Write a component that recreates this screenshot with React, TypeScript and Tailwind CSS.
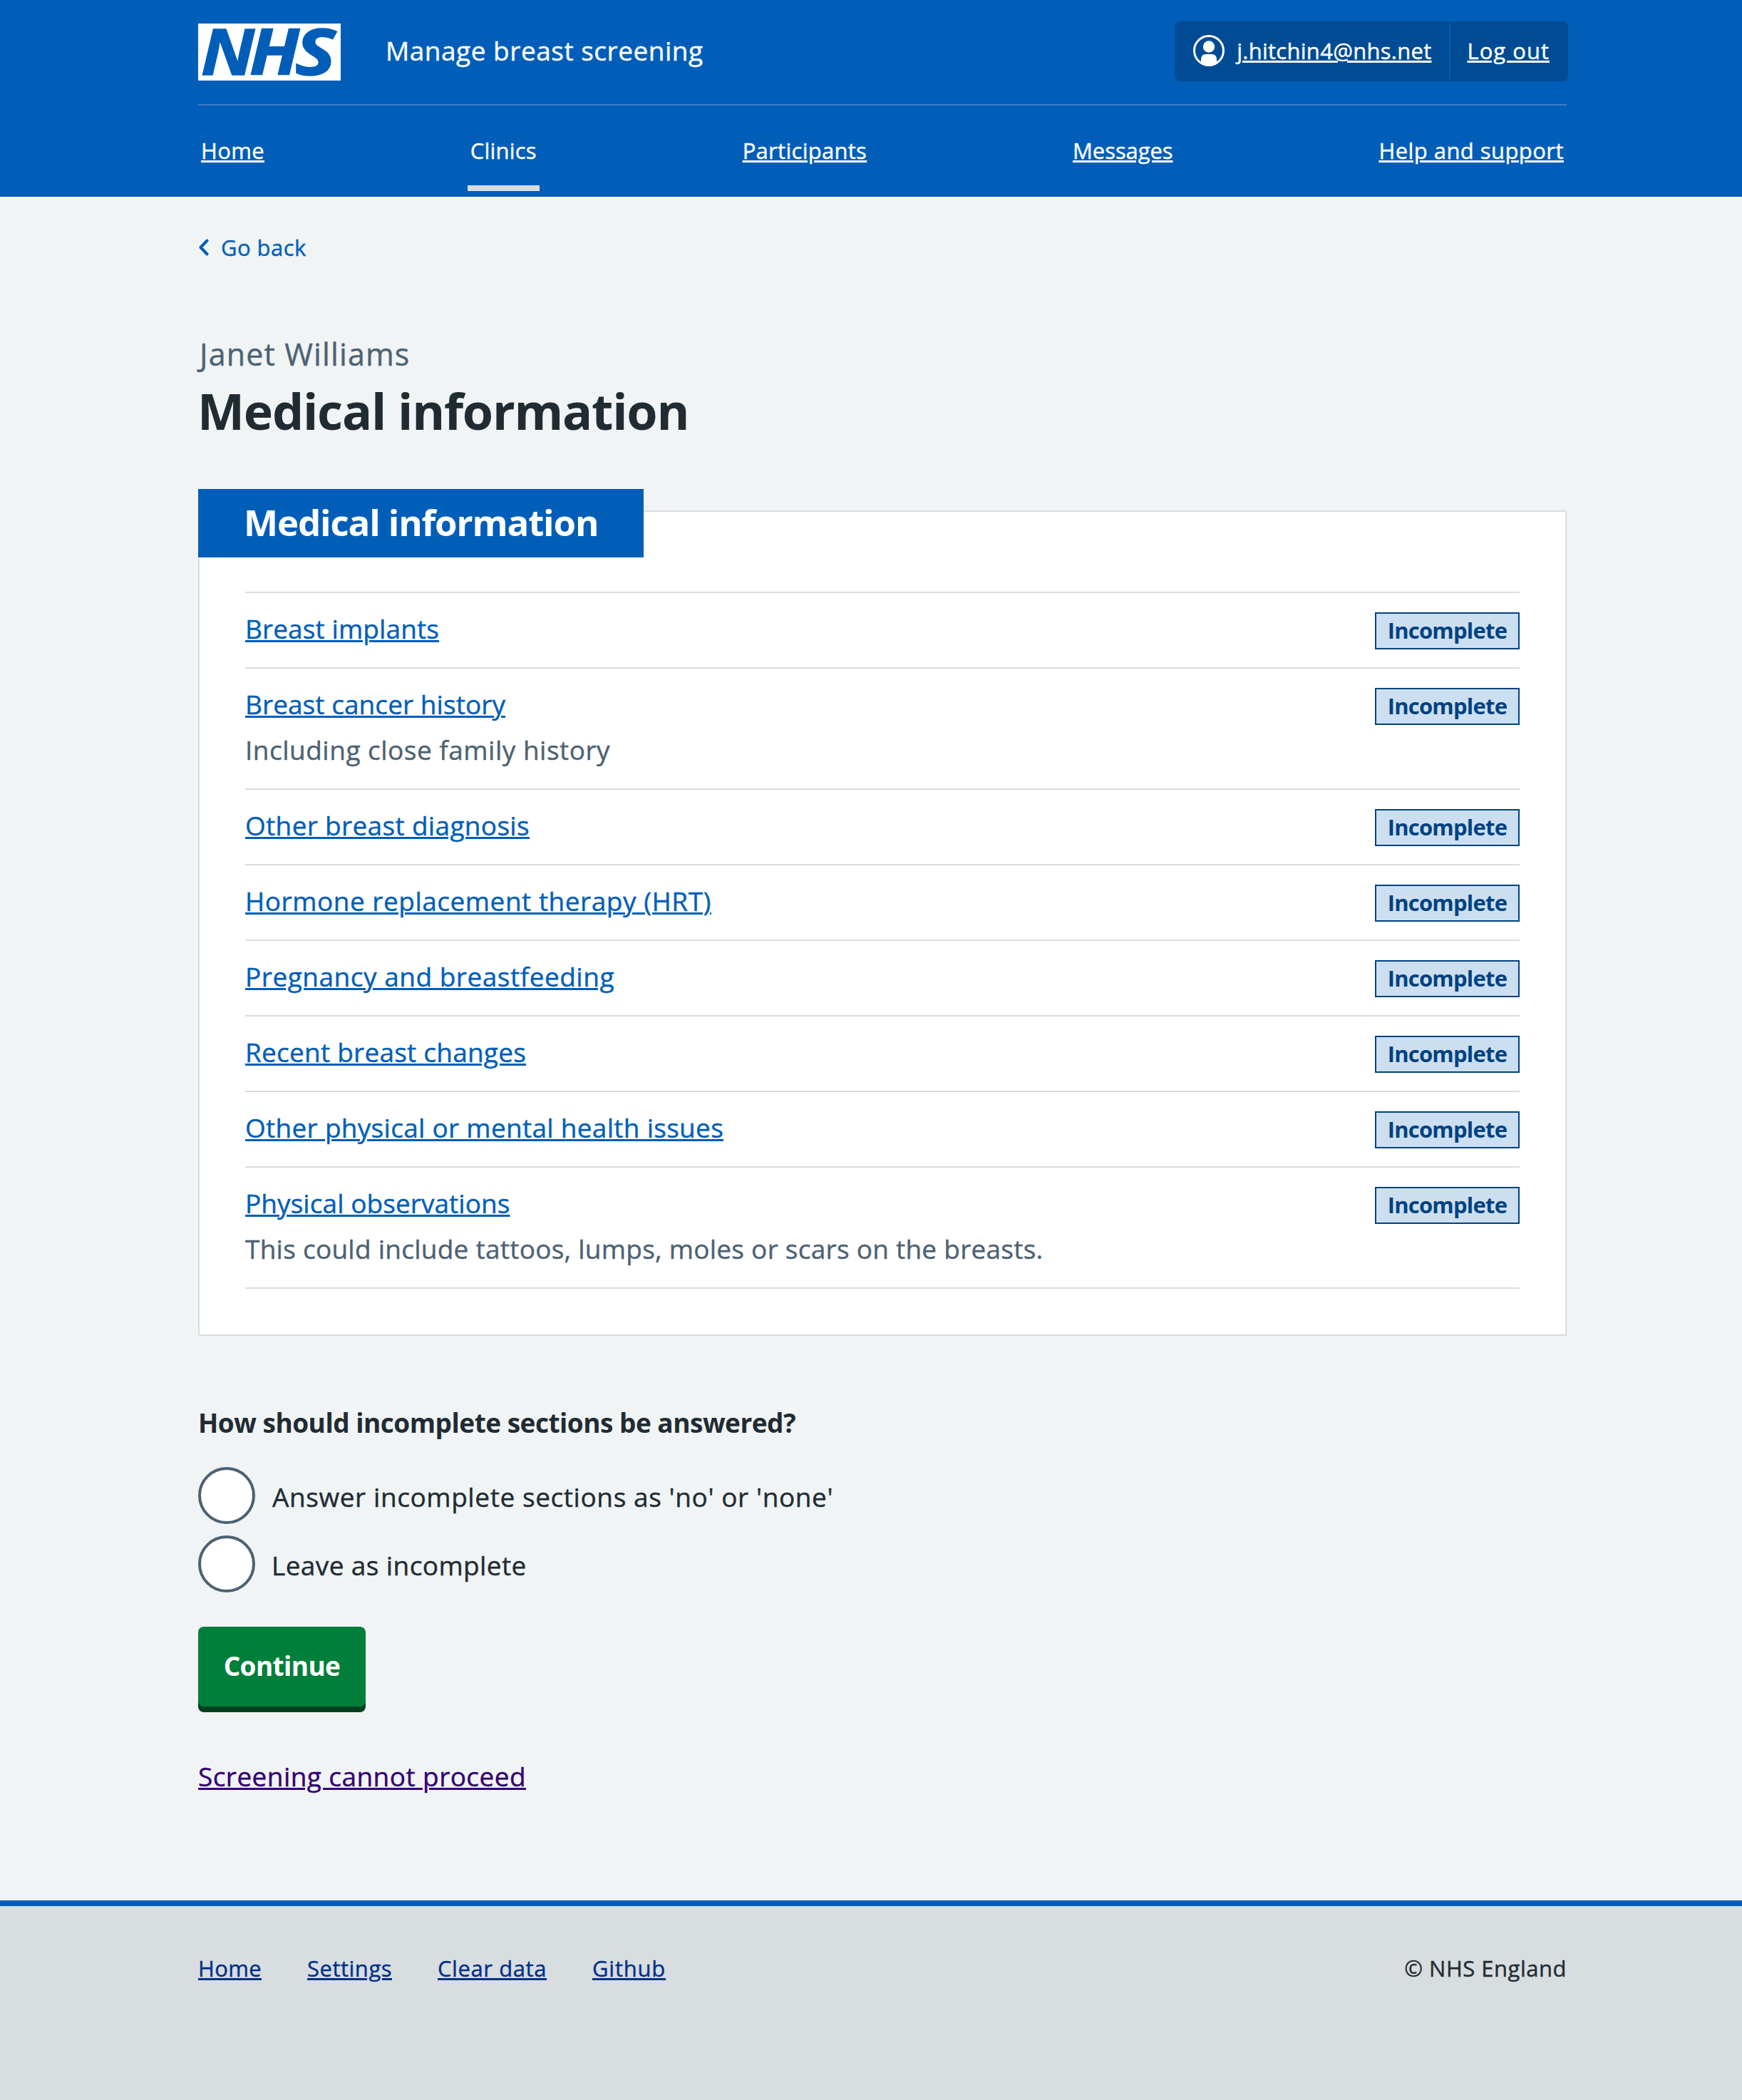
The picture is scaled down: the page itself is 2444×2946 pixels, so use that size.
import React from "react";

const link = "underline decoration-[3px] underline-offset-[2px]";
const container = "ml-[278px] w-[1920px]";

const navItems = [
  { label: "Home", tracking: "tracking-[0.0112em]" },
  { label: "Clinics", tracking: "tracking-[0.0061em]", current: true },
  { label: "Participants", tracking: "tracking-[0.0091em]" },
  { label: "Messages", tracking: "tracking-[-0.0023em]" },
  { label: "Help and support", tracking: "tracking-[0.0144em]" },
];

const sections = [
  { label: "Breast implants", tracking: "tracking-[0.0028em]" },
  {
    label: "Breast cancer history",
    tracking: "tracking-[0.0016em]",
    hint: "Including close family history",
    hintTracking: "tracking-[0.0133em]",
  },
  { label: "Other breast diagnosis", tracking: "tracking-[0.0087em]" },
  { label: "Hormone replacement therapy (HRT)", tracking: "tracking-[0.0138em]" },
  { label: "Pregnancy and breastfeeding", tracking: "tracking-[0.0138em]" },
  { label: "Recent breast changes", tracking: "tracking-[0.0061em]" },
  { label: "Other physical or mental health issues", tracking: "tracking-[0.0077em]" },
  {
    label: "Physical observations",
    tracking: "tracking-[0.0016em]",
    hint: "This could include tattoos, lumps, moles or scars on the breasts.",
    hintTracking: "tracking-[0.0068em]",
  },
];

const radios = [
  { label: "Answer incomplete sections as 'no' or 'none'", tracking: "tracking-[0.0157em]" },
  { label: "Leave as incomplete", tracking: "-ml-px tracking-[0.0105em]" },
];

const footerLinks = [
  { label: "Home", tracking: "tracking-[0.0112em]" },
  { label: "Settings", tracking: "tracking-[0.0163em]" },
  { label: "Clear data", tracking: "tracking-[0.0188em]" },
  { label: "Github", tracking: "tracking-[0.0247em]" },
];

function Logo() {
  return (
    <svg
      className="mt-[33px] h-20 w-[200px] shrink-0 overflow-visible"
      viewBox="0 0 200 80"
      fill="#005eb8"
      stroke="#005eb8"
      strokeWidth="1.5"
      fontFamily="'Open Sans', sans-serif"
      fontSize="90"
      fontWeight="700"
      fontStyle="italic"
      role="img"
      aria-label="NHS"
    >
      <rect width="200" height="80" fill="#fff" stroke="none" />
      <text x="4" y="72" textLength="75" lengthAdjust="spacingAndGlyphs">N</text>
      <text x="72" y="72" textLength="70" lengthAdjust="spacingAndGlyphs">H</text>
      <text x="136" y="72" textLength="57" lengthAdjust="spacingAndGlyphs">S</text>
    </svg>
  );
}

function UserIcon() {
  return (
    <svg className="h-11 w-11 shrink-0" viewBox="0 0 44 44">
      <defs>
        <clipPath id="user-ring">
          <circle cx="22" cy="22" r="22" />
        </clipPath>
      </defs>
      <circle cx="22" cy="22" r="20.5" fill="none" stroke="#fff" strokeWidth="3" />
      <circle cx="22" cy="16.5" r="8.2" fill="#fff" />
      <path
        d="M11 44V35Q11 27 18 27H26Q33 27 33 35V44Z"
        fill="#fff"
        clipPath="url(#user-ring)"
      />
    </svg>
  );
}

function Header() {
  return (
    <header className="h-[276px] bg-[#005eb8] text-white">
      <div className={container}>
        <div className="flex h-[148px] items-start border-b-2 border-[#407bc6]">
          <Logo />
          <span className="mt-[51px] ml-[63px] text-[37px] leading-10 tracking-[0.0137em]">
            Manage breast screening
          </span>
          <div className="mt-[30px] -mr-[2px] ml-auto flex h-[84px] rounded-lg border-2 border-[#004b93] bg-[#004b93] text-[31px] leading-10">
            <div className="flex items-center border-r-2 border-[#005eb8] pr-6 pb-0.5 pl-6">
              <UserIcon />
              <a className={`ml-[17px] tracking-[0.0087em] ${link}`}>j.hitchin4@nhs.net</a>
            </div>
            <div className="flex items-center pr-6 pb-0.5 pl-6">
              <a className={`tracking-[0.0326em] ${link}`}>Log out</a>
            </div>
          </div>
        </div>
        <nav className="flex h-[120px] justify-between text-[31px] leading-10">
          {navItems.map((item) => (
            <div
              key={item.label}
              className={`flex items-center border-b-8 px-1 pt-3.5 ${item.current ? "border-[#d8dde0]" : "border-transparent"}`}
            >
              <a className={`${item.tracking} ${item.current ? "" : link}`}>{item.label}</a>
            </div>
          ))}
        </nav>
      </div>
    </header>
  );
}

function Tag() {
  return (
    <strong className="mt-[7px] flex h-[52px] w-[203px] items-center justify-center border-2 border-[#004281] bg-[#ccdff1] pb-0.5 text-[31px] leading-10 font-bold tracking-[-0.0253em] text-[#004281] [-webkit-text-stroke:0]">
      Incomplete
    </strong>
  );
}

export default function App() {
  return (
    <div className="flex min-h-[2946px] flex-col bg-[#f0f4f5] font-['Open_Sans','Noto_Sans',sans-serif] text-[37px] leading-[60px] text-[#212b32] [-webkit-text-stroke:0.4px]">
      <Header />
      <main className={`${container} pt-[47px]`}>
        <a className="flex h-12 items-center text-[31px] leading-[48px] tracking-[0.0146em] text-[#005eb8]">
          <svg className="h-6 w-4" viewBox="0 0 16 24" fill="none" stroke="#005eb8" strokeWidth="4" strokeLinecap="round" strokeLinejoin="round">
            <path d="M12.5 2.5L3.5 12L12.5 21.5" />
          </svg>
          <span className="ml-4">Go back</span>
        </a>
        <p className="mt-24 ml-0.5 text-[43px] tracking-[0.026em] text-[#4c6272]">Janet Williams</p>
        <h1 className="mt-[9px] -ml-px text-[70px] leading-[80px] font-bold tracking-[-0.0175em] [-webkit-text-stroke:0]">
          Medical information
        </h1>

        <section className="mt-[100px] border-2 border-[#d8dde0] bg-white pb-16">
          <h2 className="-mt-8 -ml-0.5 flex h-24 w-[625px] items-center bg-[#005eb8] pb-1 pl-16 text-[51px] font-bold tracking-[-0.0225em] whitespace-nowrap text-white [-webkit-text-stroke:0]">
            Medical information
          </h2>
          <ul className="mx-16 mt-12 border-t-2 border-[#d8dde0]">
            {sections.map((s) => (
              <li key={s.label} className="flex items-start justify-between border-b-2 border-[#d8dde0] pt-5 pb-6">
                <div className="flex flex-col items-start gap-1">
                  <a className={`text-[#005eb8] ${s.tracking} ${link}`}>{s.label}</a>
                  {s.hint && <span className={`text-[#4c6272] ${s.hintTracking}`}>{s.hint}</span>}
                </div>
                <Tag />
              </li>
            ))}
          </ul>
        </section>

        <h3 className="mt-[92px] font-bold tracking-[-0.0136em] [-webkit-text-stroke:0]">
          How should incomplete sections be answered?
        </h3>
        <div className="mt-8 flex flex-col gap-4">
          {radios.map((r) => (
            <label key={r.label} className="flex h-20 items-center gap-6">
              <span className="h-20 w-20 shrink-0 rounded-full border-4 border-[#4c6272] bg-white" />
              <span className={`pt-[3px] ${r.tracking}`}>{r.label}</span>
            </label>
          ))}
        </div>
        <button className="mt-12 flex h-28 w-[235px] items-center justify-center rounded-lg bg-[#007f3b] pb-[3px] font-bold tracking-[-0.0169em] text-white shadow-[0_8px_0_#00401e] [-webkit-text-stroke:0]">
          Continue
        </button>
        <p className="mt-[68px]">
          <a className={`tracking-[0.0115em] text-[#330072] ${link}`}>Screening cannot proceed</a>
        </p>
      </main>
      <footer className="mt-36 grow border-t-8 border-[#005eb8] bg-[#d8dde0] pt-[67px] text-[31px] leading-10">
        <div className={`${container} flex justify-between`}>
          <div className="flex gap-16">
            {footerLinks.map((f) => (
              <a key={f.label} className={`text-[#003087] ${f.tracking} ${link}`}>{f.label}</a>
            ))}
          </div>
          <span className="tracking-[0.0165em]">© NHS England</span>
        </div>
      </footer>
    </div>
  );
}
